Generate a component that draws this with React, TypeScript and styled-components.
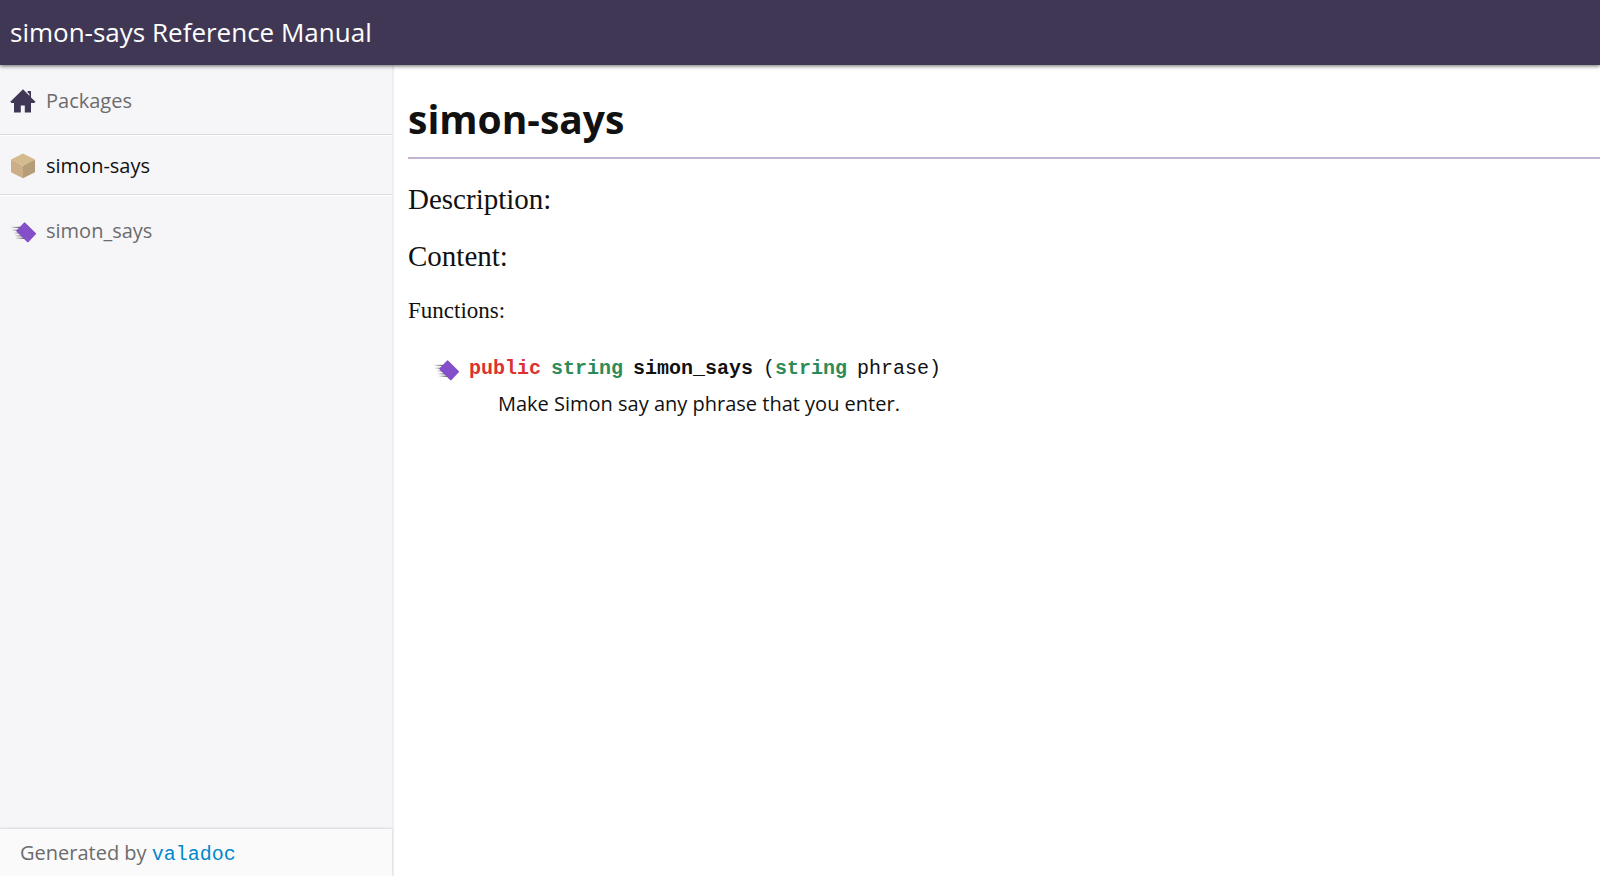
import React from "react";
import styled, { createGlobalStyle } from "styled-components";

const sans = `"Open Sans", "Noto Sans", sans-serif`;
const serif = `"Liberation Serif", serif`;
const mono = `"Liberation Mono", monospace`;

const GlobalStyle = createGlobalStyle`
  *, *::before, *::after { box-sizing: border-box; }
  body {
    margin: 0;
    background: #fff;
    color: #111;
    font: 20px/28px ${sans};
  }
`;

const Page = styled.div`
  display: flex;
  flex-direction: column;
  min-height: 100vh;
`;

const Header = styled.header`
  position: relative;
  z-index: 1;
  padding: 14px 10px 15px;
  background: #403755;
  color: #fff;
  font-size: 26px;
  line-height: 36px;
  box-shadow: 0 1px 4px rgba(0, 0, 0, 0.6);
`;

const Body = styled.div`
  display: flex;
  flex: 1;
`;

const Sidebar = styled.aside`
  display: flex;
  flex-direction: column;
  flex: 0 0 394px;
  background: #f6f6f9;
  border-right: 2px solid #eeeef3;
`;

const NavList = styled.ul`
  flex: 1;
  margin: 0;
  padding: 0;
  list-style: none;
`;

const NavItem = styled.li<{ $tall?: boolean; $last?: boolean }>`
  display: flex;
  align-items: center;
  height: ${(p) => (p.$tall ? 70 : 60)}px;
  padding-top: 2px;
  ${(p) =>
    !p.$last &&
    `border-bottom: 1px solid #dcdce0; box-shadow: 0 1px 0 #fff;`}
`;

const NavLink = styled.a<{ $current?: boolean }>`
  display: flex;
  align-items: center;
  gap: 10px;
  padding: 0 10px;
  color: ${(p) => (p.$current ? "#111" : "#6c6c6c")};
  text-decoration: none;
`;

const Icon = styled.svg`
  display: block;
  flex: none;
  width: 26px;
  height: 26px;
`;

const Footer = styled.footer`
  padding: 10px 20px 8px;
  background: #fafafa;
  color: #6c6c6c;
  line-height: 27px;
  box-shadow: 0 -1px 2px rgba(0, 0, 0, 0.12);
`;

const FooterLink = styled.a`
  color: #0088cc;
  font-family: ${mono};
  text-decoration: none;
`;

const Main = styled.main`
  flex: 1;
  padding: 26px 0 26px 14px;
`;

const Title = styled.h1`
  margin: 0 0 23px;
  padding-bottom: 10px;
  border-bottom: 2px solid #c3b4d3;
  font-size: 39px;
  line-height: 56px;
`;

const Heading = styled.h2`
  margin: 22px 0 0;
  font: 400 29px/35px ${serif};
`;

const SubHeading = styled.h3`
  margin: 22px 0 0;
  font: 400 23px/30px ${serif};
`;

const Members = styled.ul`
  margin: 29px 0 0;
  padding: 0 0 0 25px;
  list-style: none;
`;

const Signature = styled.div`
  display: flex;
  align-items: center;
  gap: 10px;
`;

const Code = styled.code`
  display: flex;
  flex-wrap: wrap;
  gap: 10px;
  font-family: ${mono};
`;

const Keyword = styled.b`
  color: #dc322f;
`;

const Type = styled.b`
  color: #2e8b57;
`;

const Name = styled.a`
  color: #111;
  font-weight: 700;
  text-decoration: none;
`;

const Summary = styled.p`
  margin: 7px 0 0 65px;
`;

const HomeIcon = () => (
  <Icon viewBox="0 0 26 26" aria-hidden="true">
    <path
      fill="#403755"
      d="M13 1.2 L0.3 13.8 L1.4 15 H4 V24.4 H10.8 V17.6 H14.8 V24.4 H21 V15 H24.2 L25.5 13.8 L21 9.4 V3 H17.6 V4.4 L19.4 6 V7.8 Z"
    />
  </Icon>
);

const PackageIcon = () => (
  <Icon viewBox="0 0 26 26" aria-hidden="true">
    <path fill="#d4bb8e" d="M13 0.5 L25 6.5 L13 12.8 L1 6.5 Z" />
    <path fill="#ccae88" d="M1 6.5 L13 12.8 V25.3 L1 19.2 Z" />
    <path fill="#b59d77" d="M25 6.5 L13 12.8 V25.3 L25 19.2 Z" />
  </Icon>
);

const MethodIcon = () => (
  <Icon viewBox="0 0 26 26" aria-hidden="true">
    <defs>
      <linearGradient id="trail" x1="0" x2="1" y1="0" y2="0">
        <stop offset="0" stopColor="#555" stopOpacity="0.1" />
        <stop offset="1" stopColor="#444" stopOpacity="0.9" />
      </linearGradient>
    </defs>
    <g fill="url(#trail)">
      <rect x="1" y="8.8" width="9" height="1.3" />
      <rect x="2" y="11.6" width="8" height="1.3" />
      <rect x="4" y="14.4" width="8" height="1.3" />
      <rect x="5" y="17.2" width="8" height="1.3" />
      <rect x="6" y="19.6" width="8" height="1.3" />
    </g>
    <path
      fill="#844fc8"
      stroke="#844fc8"
      strokeWidth="2"
      strokeLinejoin="round"
      d="M14.6 5.4 L25 15.6 L17.8 23.2 L7.4 13 Z"
    />
  </Icon>
);

export default function App() {
  return (
    <Page>
      <GlobalStyle />
      <Header>simon-says Reference Manual</Header>
      <Body>
        <Sidebar>
          <NavList>
            <NavItem $tall>
              <NavLink href="#packages">
                <HomeIcon />
                Packages
              </NavLink>
            </NavItem>
            <NavItem>
              <NavLink href="#package" $current>
                <PackageIcon />
                simon-says
              </NavLink>
            </NavItem>
            <NavItem $tall $last>
              <NavLink href="#simon_says">
                <MethodIcon />
                simon_says
              </NavLink>
            </NavItem>
          </NavList>
          <Footer>
            Generated by <FooterLink href="#valadoc">valadoc</FooterLink>
          </Footer>
        </Sidebar>
        <Main>
          <Title>simon-says</Title>
          <Heading>Description:</Heading>
          <Heading>Content:</Heading>
          <SubHeading>Functions:</SubHeading>
          <Members>
            <li>
              <Signature>
                <MethodIcon />
                <Code>
                  <Keyword>public</Keyword> <Type>string</Type>{" "}
                  <Name href="#simon_says">simon_says</Name>{" "}
                  <span>
                    (<Type>string</Type>
                  </span>{" "}
                  <span>phrase)</span>
                </Code>
              </Signature>
              <Summary>Make Simon say any phrase that you enter.</Summary>
            </li>
          </Members>
        </Main>
      </Body>
    </Page>
  );
}
